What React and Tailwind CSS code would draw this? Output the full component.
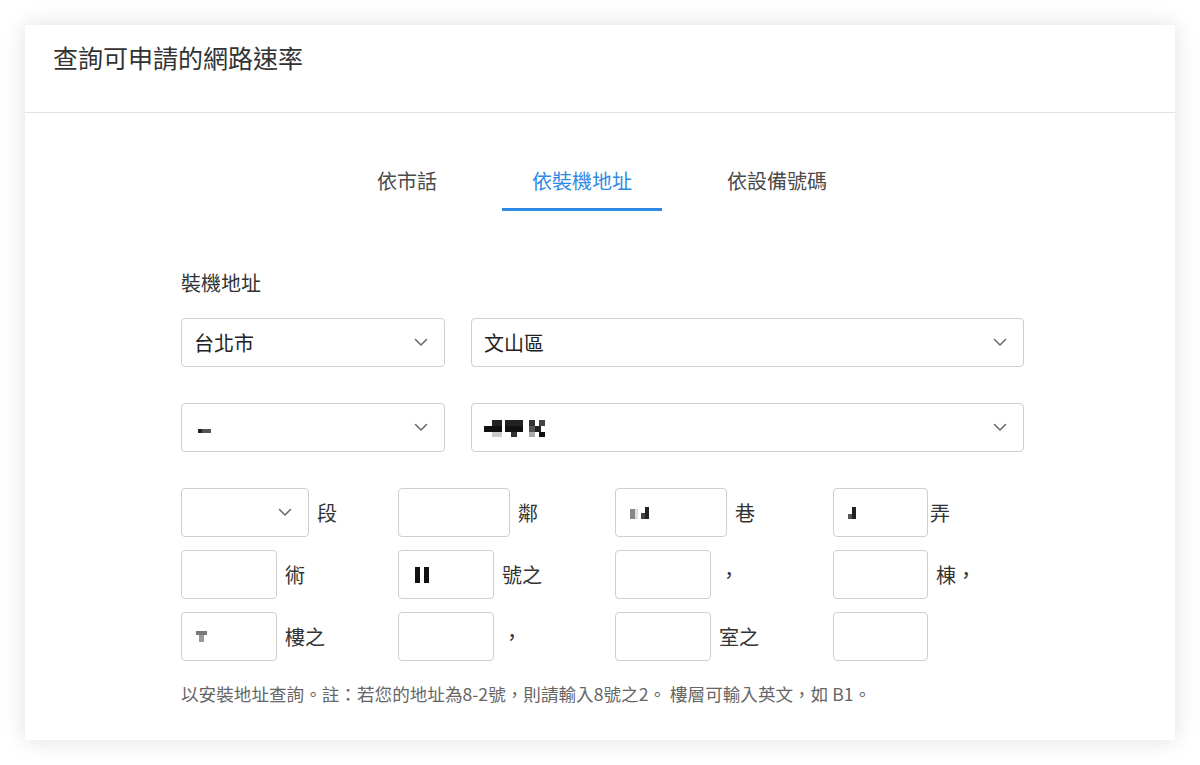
import React from "react";

const font = { fontFamily: '"Noto Sans CJK TC", "Noto Sans", sans-serif' };

function Chevron() {
  return (
    <svg width="14" height="9" viewBox="0 0 14 9" fill="none" className="shrink-0">
      <path d="M1.5 1.5 L7 7 L12.5 1.5" stroke="#6b6b6b" strokeWidth="1.6" strokeLinecap="round" strokeLinejoin="round" />
    </svg>
  );
}

function Blocks({ cells }) {
  return (
    <div className="flex items-end">
      {cells.map((c, i) => (
        <div key={i} style={{ width: c[0], height: c[1], background: c[2] }} />
      ))}
    </div>
  );
}

function Select({ w, children }) {
  return (
    <div
      className={`${w} h-[49px] shrink-0 rounded-[4px] border border-[#cfcfcf] bg-white flex items-center justify-between pl-[12px] pr-[16px]`}
    >
      <div className="text-[20px] leading-none text-[#222]">{children}</div>
      <Chevron />
    </div>
  );
}

function Input({ w, children }) {
  return (
    <div className={`${w} h-[49px] shrink-0 rounded-[4px] border border-[#cfcfcf] bg-white flex items-center pl-[14px]`}>
      {children}
    </div>
  );
}

function Label({ children, cls = "ml-[8px]" }) {
  return <span className={`${cls} text-[20px] leading-none text-[#333] whitespace-nowrap`}>{children}</span>;
}

export default function App() {
  return (
    <div className="w-[1200px] h-[765px] bg-white pt-[25px] pl-[25px]" style={font}>
      <div className="w-[1150px] h-[715px] bg-white shadow-[0_0_22px_rgba(0,0,0,0.13)] flex flex-col">
        <div className="h-[88px] border-b border-[#e2e2e2] pl-[28px] pt-[16px]">
          <h1 className="text-[25px] leading-[32px] text-[#333] font-normal">查詢可申請的網路速率</h1>
        </div>

        <div className="flex justify-center gap-[35px] mt-[39px] pl-[4px]">
          <div className="px-[30px] pt-[15px] pb-[13px] border-b-[3px] border-transparent text-[20px] leading-[28px] text-[#4a4a4a]">依市話</div>
          <div className="px-[30px] pt-[15px] pb-[13px] border-b-[3px] border-[#2f8ae6] text-[20px] leading-[28px] text-[#2f8ae6]">依裝機地址</div>
          <div className="px-[30px] pt-[15px] pb-[13px] border-b-[3px] border-transparent text-[20px] leading-[28px] text-[#4a4a4a]">依設備號碼</div>
        </div>

        <div className="pl-[156px] pr-[151px]">
          <div className="mt-[59px] text-[20px] leading-[26px] text-[#333]">裝機地址</div>

          <div className="mt-[22px] flex gap-[26px]">
            <Select w="w-[264px]">台北市</Select>
            <Select w="flex-1">文山區</Select>
          </div>

          <div className="mt-[36px] flex gap-[26px]">
            <Select w="w-[264px]">
              <div className="pt-[6px] pl-[4px]">
                <Blocks cells={[[4, 4, "#222"], [9, 4, "#555"]]} />
              </div>
            </Select>
            <Select w="flex-1">
              <div className="flex items-start gap-[3px] pt-[2px]">
                <div className="flex flex-col">
                  <div className="flex"><div className="w-[8px] h-[6px]" /><div className="w-[10px] h-[6px] bg-[#222]" /></div>
                  <div className="flex"><div className="w-[18px] h-[6px] bg-[#111]" /></div>
                  <div className="flex"><div className="w-[8px] h-[5px]" /><div className="w-[10px] h-[5px] bg-[#ccc]" /></div>
                </div>
                <div className="flex flex-col">
                  <div className="w-[18px] h-[6px] bg-[#222]" />
                  <div className="w-[18px] h-[6px] bg-[#111]" />
                  <div className="flex"><div className="w-[6px] h-[5px]" /><div className="w-[6px] h-[5px] bg-[#333]" /></div>
                </div>
                <div className="flex flex-col pl-[3px]">
                  <div className="flex"><div className="w-[6px] h-[6px] bg-[#333]" /><div className="w-[4px] h-[6px]" /><div className="w-[6px] h-[6px] bg-[#444]" /></div>
                  <div className="flex"><div className="w-[6px] h-[6px] bg-[#555]" /><div className="w-[6px] h-[6px] bg-[#222]" /><div className="w-[4px] h-[6px]" /></div>
                  <div className="flex"><div className="w-[6px] h-[5px] bg-[#aaa]" /><div className="w-[4px] h-[5px]" /><div className="w-[6px] h-[5px] bg-[#111]" /></div>
                </div>
              </div>
            </Select>
          </div>

          <div className="mt-[36px] grid grid-cols-[217px_217px_218px_auto] gap-y-[13px]">
            <div className="flex items-center">
              <Select w="w-[128px]"></Select>
              <Label>段</Label>
            </div>
            <div className="flex items-center">
              <Input w="w-[112px]" />
              <Label>鄰</Label>
            </div>
            <div className="flex items-center">
              <Input w="w-[112px]">
                <Blocks cells={[[5, 10, "#888"], [3, 10, "#ddd"], [3, 10, "#fff"], [4, 6, "#444"], [4, 12, "#222"]]} />
              </Input>
              <Label>巷</Label>
            </div>
            <div className="flex items-center">
              <Input w="w-[95px]">
                <Blocks cells={[[4, 5, "#555"], [4, 12, "#222"]]} />
              </Input>
              <Label cls="ml-[2px]">弄</Label>
            </div>

            <div className="flex items-center">
              <Input w="w-[96px]" />
              <Label>術</Label>
            </div>
            <div className="flex items-center">
              <Input w="w-[96px]">
                <div className="flex gap-[4px] pl-[2px]">
                  <div className="w-[5px] h-[16px] bg-[#111]" />
                  <div className="w-[5px] h-[16px] bg-[#111]" />
                </div>
              </Input>
              <Label>號之</Label>
            </div>
            <div className="flex items-center">
              <Input w="w-[96px]" />
              <Label>，</Label>
            </div>
            <div className="flex items-center">
              <Input w="w-[95px]" />
              <Label>棟，</Label>
            </div>

            <div className="flex items-center">
              <Input w="w-[96px]">
                <div className="flex flex-col items-center w-[11px]">
                  <div className="w-[11px] h-[4px] bg-[#777]" />
                  <div className="w-[5px] h-[7px] bg-[#999]" />
                </div>
              </Input>
              <Label>樓之</Label>
            </div>
            <div className="flex items-center">
              <Input w="w-[96px]" />
              <Label>，</Label>
            </div>
            <div className="flex items-center">
              <Input w="w-[96px]" />
              <Label>室之</Label>
            </div>
            <div className="flex items-center">
              <Input w="w-[95px]" />
            </div>
          </div>

          <p className="mt-[23px] text-[17.6px] leading-[20px] text-[#666]">
            以安裝地址查詢。註：若您的地址為8-2號，則請輸入8號之2。 樓層可輸入英文，如 B1。
          </p>
        </div>
      </div>
    </div>
  );
}
